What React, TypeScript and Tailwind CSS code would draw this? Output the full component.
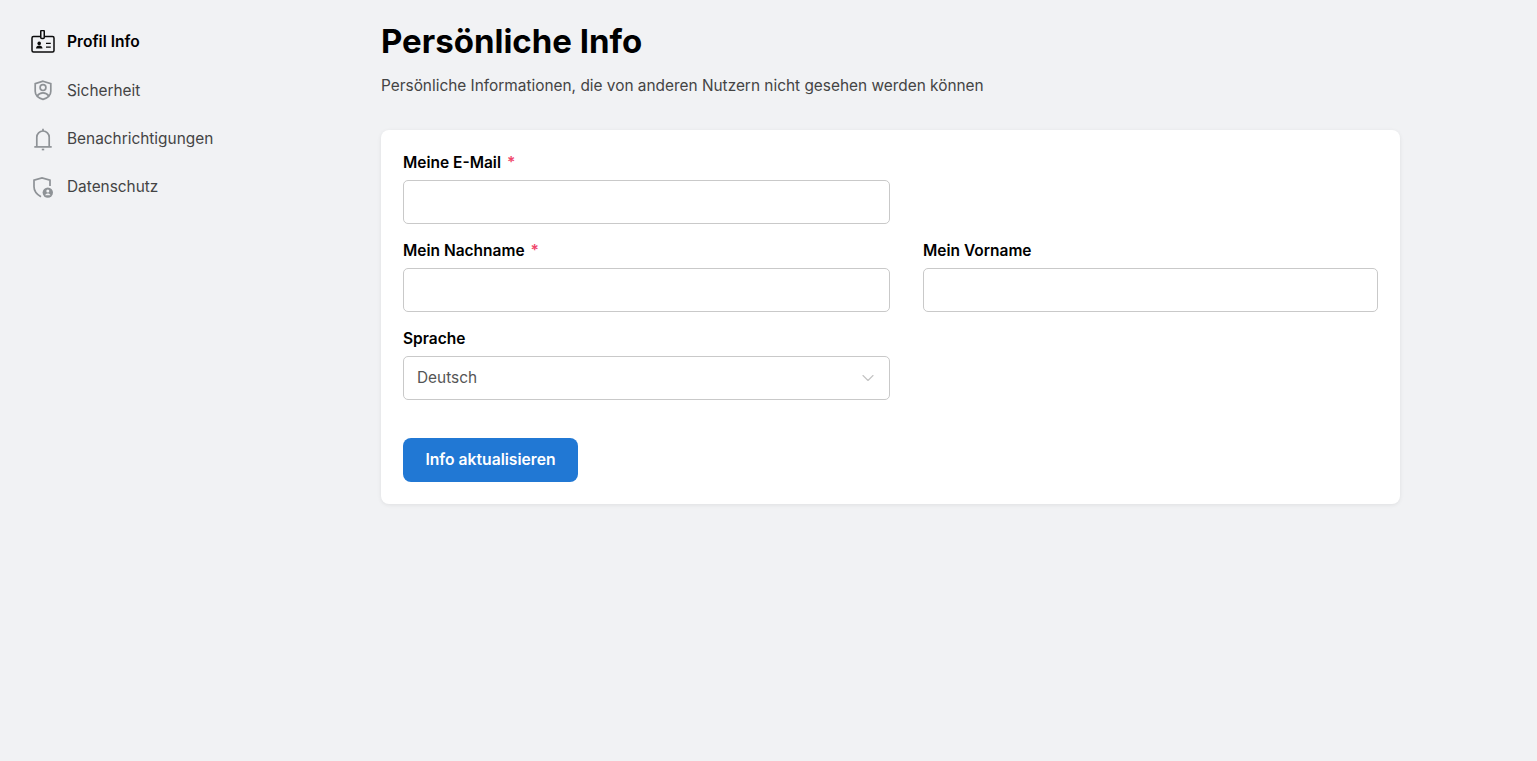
import { ChevronDown } from "lucide-react";

function BadgeIcon() {
  return (
    <svg width="24" height="24" viewBox="0 0 24 24" fill="none" stroke="#0b0b0b" strokeWidth="1.5">
      <rect x="1" y="6.5" width="22" height="15.5" rx="1.5" />
      <rect x="9.75" y="0.5" width="3.5" height="8" rx="1" fill="#f1f2f4" />
      <circle cx="8.2" cy="13.4" r="1.8" fill="#0b0b0b" stroke="none" />
      <path d="M5 18.4c0-2 1.5-3 3.2-3s3.3 1 3.3 3z" fill="#0b0b0b" stroke="none" />
      <path d="M15 13.4h4.8M15 17.2h4.8" strokeWidth="1.3" />
    </svg>
  );
}

function ShieldIcon() {
  return (
    <svg width="24" height="24" viewBox="0 0 24 24" fill="none" stroke="#8e9296" strokeWidth="1.7">
      <path d="M12 2.2l7.8 2.4v7.6c0 4-3.4 6.8-7.8 8.2-4.4-1.4-7.8-4.2-7.8-8.2V4.6z" />
      <circle cx="12" cy="8.6" r="2.9" />
      <path d="M6 17.2c1.5-2.2 3.6-3.3 6-3.3s4.500 1.100 6 3.300" />
    </svg>
  );
}

function BellIcon() {
  return (
    <svg width="24" height="24" viewBox="0 0 24 24" fill="none" stroke="#8e9296" strokeWidth="1.7">
      <path d="M12 1.800v2.200" />
      <path d="M5.800 19.500v-9.300a6.200 6.200 0 0 1 12.400 0v9.300" />
      <path d="M3.300 19.900h17.400" />
      <path d="M10.800 22.500h2.400" />
    </svg>
  );
}

function PrivacyIcon() {
  return (
    <svg width="24" height="24" viewBox="0 0 24 24" fill="none" stroke="#8e9296" strokeWidth="1.7">
      <path d="M19 11V5.200L11 3 3 5.200v6.600c0 4.400 3 7.800 7 10" />
      <circle cx="16.800" cy="17.600" r="5.200" fill="#8e9296" stroke="none" />
      <circle cx="16.800" cy="15.900" r="1.500" fill="#f1f2f4" stroke="none" />
      <path d="M14.100 20.300c.5-1.200 1.500-1.800 2.700-1.800s2.200.6 2.700 1.800z" fill="#f1f2f4" stroke="none" />
    </svg>
  );
}

const navItems = [
  { label: "Profil Info", icon: <BadgeIcon />, active: true },
  { label: "Sicherheit", icon: <ShieldIcon /> },
  { label: "Benachrichtigungen", icon: <BellIcon /> },
  { label: "Datenschutz", icon: <PrivacyIcon /> },
];

function Label({ text, required }: { text: string; required?: boolean }) {
  return (
    <label className="mb-2 block h-5 text-[15.5px] leading-[22px] font-semibold text-black">
      {text}
      {required && <span className="ml-1.5 text-[#f0476c]">*</span>}
    </label>
  );
}

const inputClass = "block h-11 w-full rounded-[5px] border border-[#c9c9c9] bg-white px-[13px] text-[15.4px] text-[#555] outline-none";

export default function App() {
  return (
    <div className="flex min-h-[761px] bg-[#f1f2f4] font-['Inter',sans-serif]">
      <aside className="w-[381px] shrink-0 pt-[18px] pl-[31px]">
        {navItems.map((item) => (
          <div key={item.label} className={item.active ? "flex h-[49px] items-center gap-3 pb-px" : "flex h-12 items-center gap-3"}>
            {item.icon}
            <span className={item.active ? "text-[15.6px] font-semibold text-black" : "text-[15.4px] text-[#444]"}>
              {item.label}
            </span>
          </div>
        ))}
      </aside>

      <main className="w-[1019px] pt-[21px]">
        <h1 className="h-10 text-[33px] leading-10 font-bold text-black">Persönliche Info</h1>
        <p className="mt-[13px] h-6 text-[15.4px] leading-6 text-[#444]">
          Persönliche Informationen, die von anderen Nutzern nicht gesehen werden können
        </p>

        <form className="mt-[32px] rounded-lg bg-white p-[22px] shadow-[0_1px_4px_rgba(0,0,0,0.08)]">
          <div className="grid grid-cols-[487px_455px] gap-x-[33px] gap-y-4">
            <div>
              <Label text="Meine E-Mail" required />
              <input className={inputClass} />
            </div>
            <div />
            <div>
              <Label text="Mein Nachname" required />
              <input className={inputClass} />
            </div>
            <div>
              <Label text="Mein Vorname" />
              <input className={inputClass} />
            </div>
            <div>
              <Label text="Sprache" />
              <div className={`${inputClass} flex items-center justify-between`}>
                <span>Deutsch</span>
                <ChevronDown size={20} strokeWidth={1.4} color="#c4c4c4" className="-mr-[2px]" />
              </div>
            </div>
          </div>

          <button type="button" className="mt-[38px] block h-11 w-[175px] rounded-lg bg-[#2178d4] text-[15.7px] font-semibold text-white">
            Info aktualisieren
          </button>
        </form>
      </main>
    </div>
  );
}
